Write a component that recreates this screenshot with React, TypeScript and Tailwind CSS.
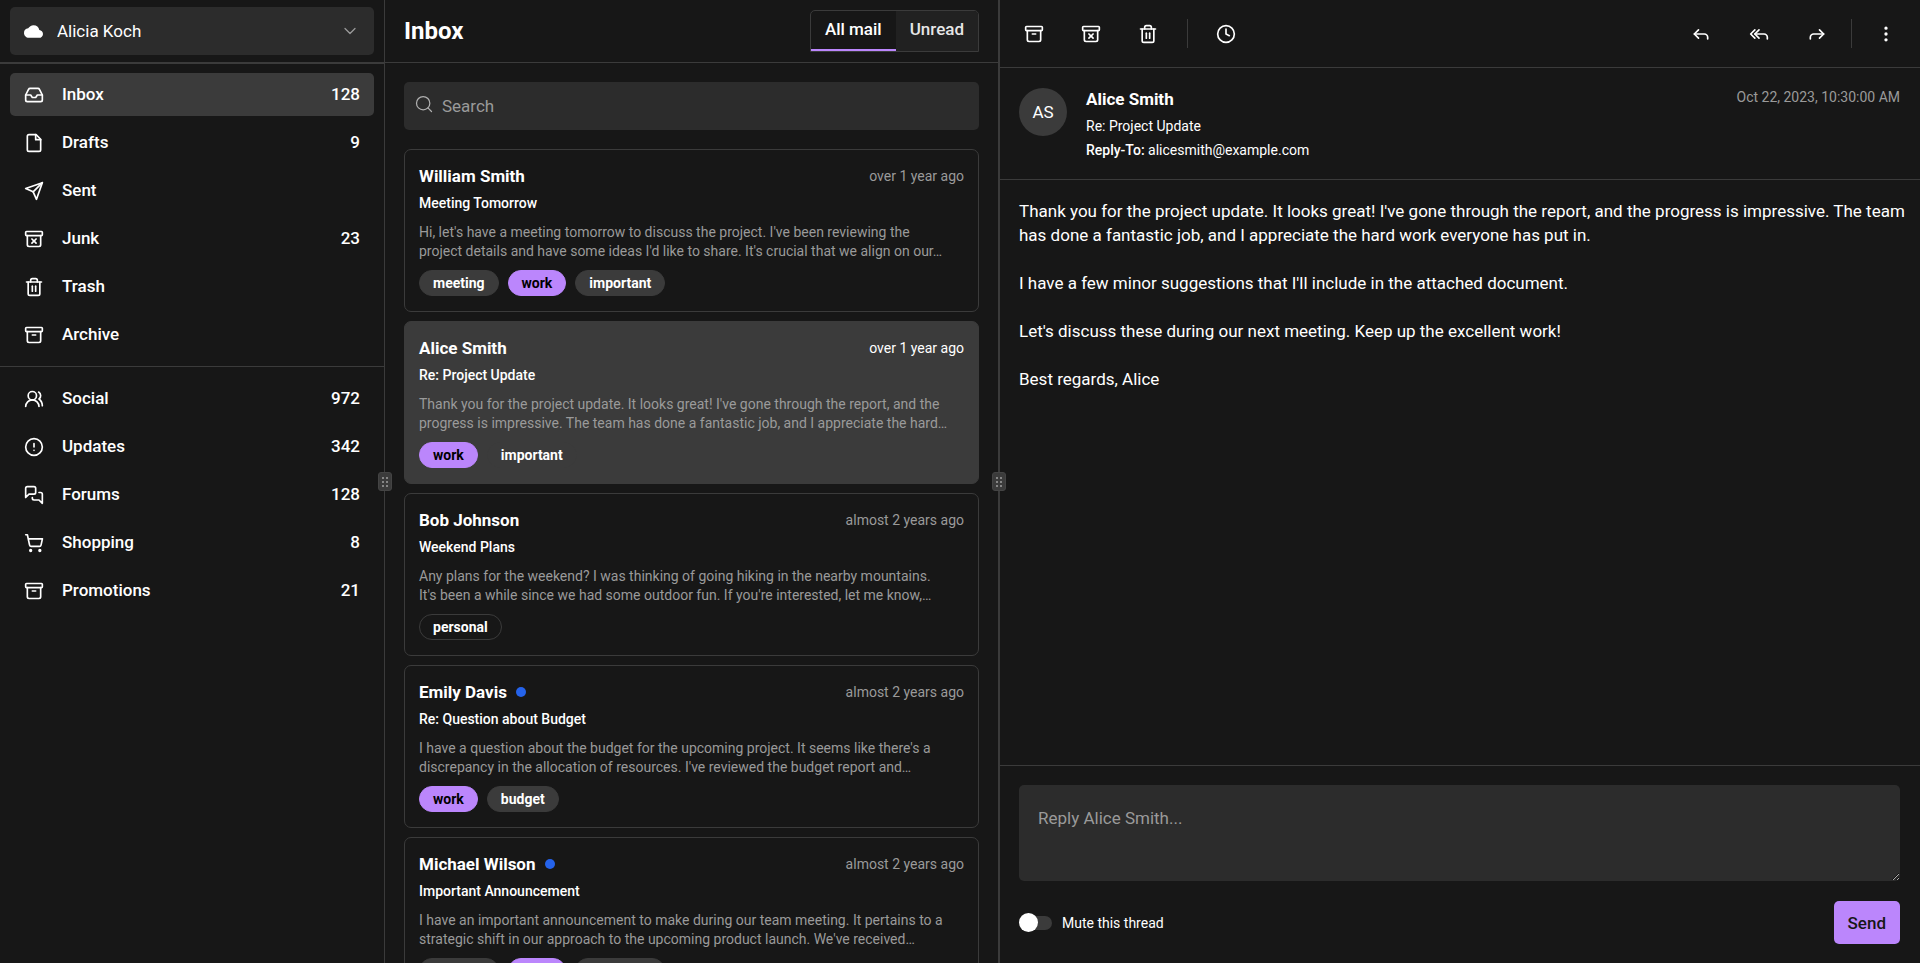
import { useState } from "react";
import type { ReactNode } from "react";
import clsx from "clsx";

function Icon({ children, className = "size-5" }: { children: ReactNode; className?: string }) {
  return (
    <svg
      viewBox="0 0 24 24"
      fill="none"
      stroke="currentColor"
      strokeWidth="2"
      strokeLinecap="round"
      strokeLinejoin="round"
      aria-hidden="true"
      className={clsx("shrink-0", className)}
    >
      {children}
    </svg>
  );
}

const icons: Record<string, ReactNode> = {
  inbox: (
    <>
      <path d="M22 12h-6l-2 3h-4l-2-3H2" />
      <path d="M5.45 5.11 2 12v6a2 2 0 0 0 2 2h16a2 2 0 0 0 2-2v-6l-3.45-6.89A2 2 0 0 0 16.76 4H7.24a2 2 0 0 0-1.79 1.11z" />
    </>
  ),
  file: (
    <>
      <path d="M14.5 2H6a2 2 0 0 0-2 2v16a2 2 0 0 0 2 2h12a2 2 0 0 0 2-2V7.5L14.5 2z" />
      <path d="M14 2v6h6" />
    </>
  ),
  send: (
    <>
      <path d="m22 2-7 20-4-9-9-4Z" />
      <path d="M22 2 11 13" />
    </>
  ),
  junk: (
    <>
      <rect width="20" height="5" x="2" y="3" rx="1" />
      <path d="M4 8v11a2 2 0 0 0 2 2h12a2 2 0 0 0 2-2V8" />
      <path d="m9.5 17 5-5" />
      <path d="m9.5 12 5 5" />
    </>
  ),
  trash: (
    <>
      <path d="M3 6h18" />
      <path d="M19 6v14c0 1-1 2-2 2H7c-1 0-2-1-2-2V6" />
      <path d="M8 6V4c0-1 1-2 2-2h4c1 0 2 1 2 2v2" />
      <path d="M10 11v6" />
      <path d="M14 11v6" />
    </>
  ),
  archive: (
    <>
      <rect width="20" height="5" x="2" y="3" rx="1" />
      <path d="M4 8v11a2 2 0 0 0 2 2h12a2 2 0 0 0 2-2V8" />
      <path d="M10 12h4" />
    </>
  ),
  users: (
    <>
      <path d="M18 21a8 8 0 0 0-16 0" />
      <circle cx="10" cy="8" r="5" />
      <path d="M22 20c0-3.37-2-6.5-4-8a5 5 0 0 0-.45-8.3" />
    </>
  ),
  alert: (
    <>
      <circle cx="12" cy="12" r="10" />
      <path d="M12 8v4" />
      <path d="M12 16h.01" />
    </>
  ),
  messages: (
    <>
      <path d="M14 9a2 2 0 0 1-2 2H6l-4 4V4c0-1.1.9-2 2-2h8a2 2 0 0 1 2 2v5Z" />
      <path d="M18 9h2a2 2 0 0 1 2 2v11l-4-4h-6a2 2 0 0 1-2-2v-1" />
    </>
  ),
  cart: (
    <>
      <circle cx="8" cy="21" r="1" />
      <circle cx="19" cy="21" r="1" />
      <path d="M2.05 2.05h2l2.66 12.42a2 2 0 0 0 2 1.58h9.78a2 2 0 0 0 1.95-1.57l1.65-7.43H5.12" />
    </>
  ),
  clock: (
    <>
      <circle cx="12" cy="12" r="10" />
      <path d="M12 6v6l4 2" />
    </>
  ),
  reply: (
    <>
      <path d="m9 17-5-5 5-5" />
      <path d="M20 18v-2a4 4 0 0 0-4-4H4" />
    </>
  ),
  replyAll: (
    <>
      <path d="m7 17-5-5 5-5" />
      <path d="m12 17-5-5 5-5" />
      <path d="M22 18v-2a4 4 0 0 0-4-4H7" />
    </>
  ),
  forward: (
    <>
      <path d="m15 17 5-5-5-5" />
      <path d="M4 18v-2a4 4 0 0 1 4-4h12" />
    </>
  ),
  more: (
    <>
      <circle cx="12" cy="12" r="1" />
      <circle cx="12" cy="5" r="1" />
      <circle cx="12" cy="19" r="1" />
    </>
  ),
};

type NavEntry = { icon: string; label: string; count?: string };

const folders: NavEntry[] = [
  { icon: "inbox", label: "Inbox", count: "128" },
  { icon: "file", label: "Drafts", count: "9" },
  { icon: "send", label: "Sent" },
  { icon: "junk", label: "Junk", count: "23" },
  { icon: "trash", label: "Trash" },
  { icon: "archive", label: "Archive" },
];

const categories: NavEntry[] = [
  { icon: "users", label: "Social", count: "972" },
  { icon: "alert", label: "Updates", count: "342" },
  { icon: "messages", label: "Forums", count: "128" },
  { icon: "cart", label: "Shopping", count: "8" },
  { icon: "archive", label: "Promotions", count: "21" },
];

type Mail = {
  name: string;
  age: string;
  subject: string;
  preview: string;
  tags: string[];
  unread?: boolean;
};

const mails: Mail[] = [
  {
    name: "William Smith",
    age: "over 1 year ago",
    subject: "Meeting Tomorrow",
    preview:
      "Hi, let's have a meeting tomorrow to discuss the project. I've been reviewing the project details and have some ideas I'd like to share. It's crucial that we align on our…",
    tags: ["meeting", "work", "important"],
  },
  {
    name: "Alice Smith",
    age: "over 1 year ago",
    subject: "Re: Project Update",
    preview:
      "Thank you for the project update. It looks great! I've gone through the report, and the progress is impressive. The team has done a fantastic job, and I appreciate the hard…",
    tags: ["work", "important"],
  },
  {
    name: "Bob Johnson",
    age: "almost 2 years ago",
    subject: "Weekend Plans",
    preview:
      "Any plans for the weekend? I was thinking of going hiking in the nearby mountains. It's been a while since we had some outdoor fun. If you're interested, let me know,…",
    tags: ["personal"],
  },
  {
    name: "Emily Davis",
    age: "almost 2 years ago",
    subject: "Re: Question about Budget",
    preview:
      "I have a question about the budget for the upcoming project. It seems like there's a discrepancy in the allocation of resources. I've reviewed the budget report and…",
    tags: ["work", "budget"],
    unread: true,
  },
  {
    name: "Michael Wilson",
    age: "almost 2 years ago",
    subject: "Important Announcement",
    preview:
      "I have an important announcement to make during our team meeting. It pertains to a strategic shift in our approach to the upcoming product launch. We've received…",
    tags: ["meeting", "work", "important"],
    unread: true,
  },
];

function NavList({ items, label, active }: { items: NavEntry[]; label: string; active?: string }) {
  return (
    <nav aria-label={label} className="flex flex-col gap-[5px] px-[10px]">
      {items.map((item) => (
        <a
          key={item.label}
          href="#"
          className={clsx(
            "flex h-[43px] items-center rounded-[5px] px-[14px] font-medium hover:bg-[#2c2c2c]",
            item.label === active && "bg-[#3b3b3b]",
          )}
        >
          <Icon>{icons[item.icon]}</Icon>
          <span className="ml-[18px] flex-1 pb-px">{item.label}</span>
          {item.count && <span className="pb-px">{item.count}</span>}
        </a>
      ))}
    </nav>
  );
}

function Handle() {
  return (
    <div role="separator" aria-orientation="vertical" className="flex items-center justify-center bg-[#3b3b3b]">
      <div className="z-10 flex h-[19px] w-[14px] shrink-0 items-center justify-center rounded-[3px] border border-[#444444] bg-[#3b3b3b]">
        <svg viewBox="0 0 6 10" className="h-[10px] w-[6px] shrink-0 text-[#e6e6e6]" fill="currentColor" aria-hidden="true">
          {[1, 5].map((x) => [1, 5, 9].map((y) => <circle key={`${x}-${y}`} cx={x} cy={y} r="0.8" />))}
        </svg>
      </div>
    </div>
  );
}

function Tag({ name }: { name: string }) {
  return (
    <span
      className={clsx(
        "flex h-[26px] items-center rounded-full border px-[13px] text-sm font-bold",
        name === "work" && "border-[#bb86fc] bg-[#bb86fc] text-black",
        name === "personal" && "border-[#3b3b3b]",
        name !== "work" && name !== "personal" && "border-[#3b3b3b] bg-[#3b3b3b]",
      )}
    >
      {name}
    </span>
  );
}

function MailCard({ mail, selected, onSelect }: { mail: Mail; selected: boolean; onSelect: () => void }) {
  return (
    <button
      type="button"
      onClick={onSelect}
      className={clsx(
        "flex shrink-0 flex-col rounded-[7px] border border-[#3b3b3b] px-[14px] pt-[14px] pb-[15px] text-left",
        selected && "bg-[#3b3b3b]",
      )}
    >
      <span className="flex w-full items-center">
        <span className="font-bold">{mail.name}</span>
        {mail.unread && <span className="ml-[9px] size-[10px] rounded-full bg-[#2563eb]" />}
        <span className={clsx("ml-auto text-sm leading-6", !selected && "text-[#9a9a9a]")}>{mail.age}</span>
      </span>
      <span className="mt-1 text-sm leading-[22px] font-medium">{mail.subject}</span>
      <span className="mt-[9px] pr-[14px] text-sm leading-[19px] text-[#9a9a9a]">{mail.preview}</span>
      <span className="mt-[9px] flex gap-[9px]">
        {mail.tags.map((tag) => (
          <Tag key={tag} name={tag} />
        ))}
      </span>
    </button>
  );
}

function ToolButton({ icon, label }: { icon: string; label: string }) {
  return (
    <button type="button" aria-label={label} className="flex h-[43px] w-12 items-center justify-center rounded-[5px] hover:bg-[#2c2c2c]">
      <Icon>{icons[icon]}</Icon>
    </button>
  );
}

export default function App() {
  const [tab, setTab] = useState("All mail");
  const [selected, setSelected] = useState("Alice Smith");

  return (
    <div className="grid h-screen grid-cols-[minmax(0,384fr)_1px_minmax(0,613fr)_2px_minmax(0,920fr)] bg-[#171717] font-[Roboto,sans-serif] text-[17px] leading-6 text-white">
      <aside className="min-h-0 overflow-hidden">
        <div className="border-b-2 border-[#3b3b3b] px-[10px] py-[7px]">
          <div className="grid items-center">
            <select
              aria-label="Account"
              className="col-start-1 row-start-1 h-12 w-full appearance-none rounded-[5px] bg-[#2c2c2c] pl-[47px]"
            >
              <option>Alicia Koch</option>
            </select>
            <svg
              viewBox="0 0 24 24"
              fill="currentColor"
              aria-hidden="true"
              className="pointer-events-none col-start-1 row-start-1 ml-[14px] size-[19px]"
            >
              <path d="M19.35 10.04A7.49 7.49 0 0 0 12 4C9.11 4 6.6 5.64 5.35 8.04A5.994 5.994 0 0 0 0 14c0 3.31 2.69 6 6 6h13c2.76 0 5-2.24 5-5 0-2.64-2.05-4.78-4.65-4.96z" />
            </svg>
            <Icon className="pointer-events-none col-start-1 row-start-1 mr-[14px] size-5 justify-self-end stroke-[1.5] text-[#9a9a9a]">
              <path d="m6 9 6 6 6-6" />
            </Icon>
          </div>
        </div>
        <div className="pt-[9px]">
          <NavList items={folders} label="Folders" active="Inbox" />
          <hr className="my-[10px] border-[#3b3b3b]" />
          <NavList items={categories} label="Categories" />
        </div>
      </aside>

      <Handle />

      <section className="flex min-h-0 flex-col overflow-hidden">
        <header className="flex shrink-0 items-center justify-between border-b border-[#3b3b3b] px-[19px] py-[10px]">
          <h1 className="text-2xl font-bold">Inbox</h1>
          <div role="tablist" className="flex h-[42px] overflow-hidden rounded-t-[5px] border border-[#3b3b3b]">
            {["All mail", "Unread"].map((name) => (
              <button
                key={name}
                type="button"
                role="tab"
                aria-selected={tab === name}
                onClick={() => setTab(name)}
                className={clsx(
                  "border-b-2 px-[14px] pb-[3px] font-medium",
                  tab === name ? "border-[#bb86fc]" : "border-[#212121] bg-[#212121] text-[#e6e6e6]",
                )}
              >
                {name}
              </button>
            ))}
          </div>
        </header>
        <div className="grid shrink-0 px-[19px] py-[19px]">
          <input
            type="search"
            aria-label="Search"
            placeholder="Search"
            className="col-start-1 row-start-1 h-12 w-full rounded-[5px] bg-[#2c2c2c] pl-[38px] placeholder:text-[#9a9a9a]"
          />
          <Icon className="pointer-events-none col-start-1 row-start-1 mt-3 ml-[10px] size-5 stroke-[1.5] text-[#b0b0b0]">
            <circle cx="11" cy="11" r="8" />
            <path d="m21 21-4.3-4.3" />
          </Icon>
        </div>
        <div className="flex min-h-0 flex-1 flex-col gap-[9px] overflow-y-auto px-[19px] [scrollbar-width:none]">
          {mails.map((mail) => (
            <MailCard
              key={mail.name}
              mail={mail}
              selected={mail.name === selected}
              onSelect={() => setSelected(mail.name)}
            />
          ))}
        </div>
      </section>

      <Handle />

      <main className="flex min-h-0 flex-col overflow-hidden">
        <div className="flex shrink-0 items-center justify-between border-b border-[#3b3b3b] px-[10px] py-3">
          <div className="flex items-center gap-[9px]">
            <ToolButton icon="archive" label="Archive" />
            <ToolButton icon="junk" label="Move to junk" />
            <ToolButton icon="trash" label="Move to trash" />
            <span className="mr-[5px] ml-[6px] h-[29px] w-px bg-[#3b3b3b]" />
            <ToolButton icon="clock" label="Snooze" />
          </div>
          <div className="flex items-center gap-[10px]">
            <ToolButton icon="reply" label="Reply" />
            <ToolButton icon="replyAll" label="Reply all" />
            <ToolButton icon="forward" label="Forward" />
            <span className="h-[29px] w-px bg-[#3b3b3b]" />
            <ToolButton icon="more" label="More" />
          </div>
        </div>
        <div className="flex shrink-0 items-start border-b border-[#3b3b3b] pt-5 pr-5 pb-[17px] pl-[19px]">
          <div className="flex size-12 shrink-0 items-center justify-center rounded-full bg-[#3b3b3b]">AS</div>
          <div className="ml-[19px] flex-1">
            <h2 className="leading-[22px] font-bold">Alice Smith</h2>
            <p className="mt-1 text-sm leading-6">Re: Project Update</p>
            <p className="text-sm leading-6">
              <span className="font-medium">Reply-To:</span> alicesmith@example.com
            </p>
          </div>
          <time className="text-sm leading-[19px] text-[#9a9a9a]">Oct 22, 2023, 10:30:00 AM</time>
        </div>
        <div className="flex-1 overflow-y-auto py-[19px] pr-3 pl-[19px] whitespace-pre-line">
          {
            "Thank you for the project update. It looks great! I've gone through the report, and the progress is impressive. The team has done a fantastic job, and I appreciate the hard work everyone has put in.\n\nI have a few minor suggestions that I'll include in the attached document.\n\nLet's discuss these during our next meeting. Keep up the excellent work!\n\nBest regards, Alice"
          }
        </div>
        <form
          className="flex shrink-0 flex-col border-t border-[#3b3b3b] py-[19px] pr-5 pl-[19px]"
          onSubmit={(e) => e.preventDefault()}
        >
          <textarea
            aria-label="Reply"
            placeholder="Reply Alice Smith..."
            className="h-24 w-full rounded-[5px] bg-[#2c2c2c] px-[19px] py-[21px] placeholder:text-[#9a9a9a]"
          />
          <div className="mt-5 flex items-center justify-between">
            <label className="flex items-center text-sm">
              <input
                type="checkbox"
                role="switch"
                className="mr-[10px] grid h-[19px] w-[33px] appearance-none items-center before:[grid-area:1/1] before:h-[14px] before:w-full before:rounded-full before:bg-[#3b3b3b] after:z-10 after:[grid-area:1/1] after:size-[19px] after:rounded-full after:bg-white checked:after:ml-auto checked:before:bg-[#bb86fc]"
              />
              Mute this thread
            </label>
            <button type="submit" className="h-[43px] rounded-[5px] bg-[#bb86fc] px-[14px] font-medium text-[#171717]">
              Send
            </button>
          </div>
        </form>
      </main>
    </div>
  );
}
